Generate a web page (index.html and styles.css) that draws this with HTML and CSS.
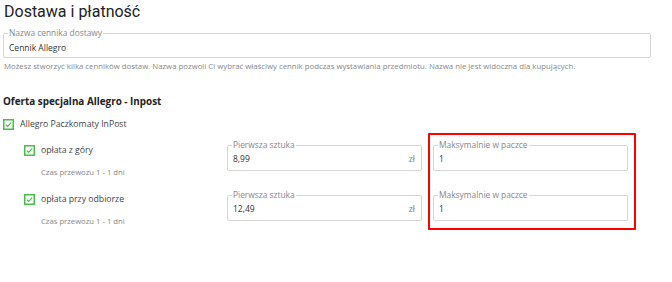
FILE: index.html
```html
<!DOCTYPE html>
<html lang="pl">
<head>
    <meta charset="UTF-8">
    <title>Dostawa i płatność</title>
    <link rel="stylesheet" href="styles.css">
</head>
<body>
    <div class="page">
        <h1>Dostawa i płatność</h1>

        <fieldset class="field name-field">
            <legend>Nazwa cennika dostawy</legend>
            <div class="value">Cennik Allegro</div>
        </fieldset>
        <p class="hint">Możesz stworzyć kilka cenników dostaw. Nazwa pozwoli Ci wybrać właściwy cennik podczas wystawiania przedmiotu. Nazwa nie jest widoczna dla kupujących.</p>

        <h2>Oferta specjalna Allegro - Inpost</h2>

        <div class="check-row">
            <svg class="check" width="11" height="11" viewBox="0 0 11 11"><rect x="0.75" y="0.75" width="9.5" height="9.5" fill="#fff" stroke="#45c045" stroke-width="1.5"/><polyline points="2.8,5.6 4.6,7.4 8.2,3.6" fill="none" stroke="#45c045" stroke-width="1.2"/></svg>
            <span>Allegro Paczkomaty InPost</span>
        </div>

        <div class="tariffs">
            <div class="methods">
                <div class="method">
                    <div class="check-row">
                        <svg class="check" width="11" height="11" viewBox="0 0 11 11"><rect x="0.75" y="0.75" width="9.5" height="9.5" fill="#fff" stroke="#45c045" stroke-width="1.5"/><polyline points="2.8,5.6 4.6,7.4 8.2,3.6" fill="none" stroke="#45c045" stroke-width="1.2"/></svg>
                        <span>opłata z góry</span>
                    </div>
                    <div class="transit">Czas przewozu 1 - 1 dni</div>
                </div>
                <div class="method">
                    <div class="check-row">
                        <svg class="check" width="11" height="11" viewBox="0 0 11 11"><rect x="0.75" y="0.75" width="9.5" height="9.5" fill="#fff" stroke="#45c045" stroke-width="1.5"/><polyline points="2.8,5.6 4.6,7.4 8.2,3.6" fill="none" stroke="#45c045" stroke-width="1.2"/></svg>
                        <span>opłata przy odbiorze</span>
                    </div>
                    <div class="transit">Czas przewozu 1 - 1 dni</div>
                </div>
            </div>

            <div class="prices">
                <fieldset class="field">
                    <legend>Pierwsza sztuka</legend>
                    <div class="value"><span>8,99</span><span class="unit">zł</span></div>
                </fieldset>
                <fieldset class="field">
                    <legend>Pierwsza sztuka</legend>
                    <div class="value"><span>12,49</span><span class="unit">zł</span></div>
                </fieldset>
            </div>

            <div class="limits">
                <fieldset class="field">
                    <legend>Maksymalnie w paczce</legend>
                    <div class="value">1</div>
                </fieldset>
                <fieldset class="field">
                    <legend>Maksymalnie w paczce</legend>
                    <div class="value">1</div>
                </fieldset>
            </div>
        </div>
    </div>
</body>
</html>
```

FILE: styles.css
```css
body { margin: 0; font-family: "Open Sans", sans-serif; color: #333; background: #fff; }
.page { padding: 2px 21px 0 3px; }

h1 { font-family: Roboto, "Liberation Sans", Arial, sans-serif; font-weight: 400; font-size: 16px; line-height: 20px; margin: 0 0 6px 1px; color: #222; }
h2 { font-size: 9.9px; font-weight: 700; line-height: 14px; margin: 0 0 10px 0; color: #222; }

.field { margin: 0; padding: 0 5px 6px; border: 1px solid #d6d6d6; border-radius: 2px; }
.field legend { font-size: 8.4px; line-height: 10px; padding: 0 1px; margin-left: -1px; color: #888; }
.field .value { font-size: 8.5px; line-height: 11px; padding-top: 3px; display: flex; justify-content: space-between; }
.field .unit { color: #777; padding-right: 1px; }
.name-field { padding-bottom: 4px; }
.name-field .value { padding-top: 4px; }

.hint { font-size: 7.8px; color: #888; margin: 3px 0 23px 1px; line-height: 10px; }

.check-row { display: flex; align-items: center; gap: 6px; font-size: 8.7px; line-height: 12px; color: #444; }
.check { flex: none; }

.tariffs { display: flex; align-items: flex-start; margin-top: 3px; }
.methods { width: 203px; padding-left: 21px; padding-top: 11px; display: flex; flex-direction: column; gap: 16px; }
.transit { font-size: 7.7px; color: #888; padding-left: 17px; margin-top: 11px; line-height: 10px; }

.prices { width: 195px; padding-top: 7px; display: flex; flex-direction: column; gap: 19px; margin-right: 6px; }
.limits { width: 195px; border: 2px solid #f00; border-radius: 1px; padding: 5px 6px 7px 3px; display: flex; flex-direction: column; gap: 19px; }
```
